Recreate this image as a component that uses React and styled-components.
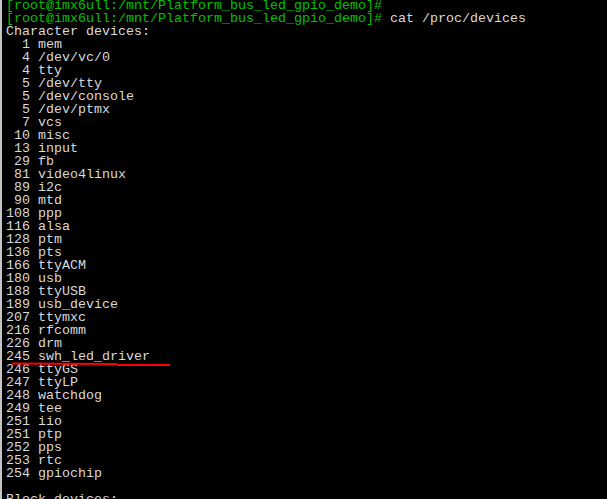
import React from "react";
import styled, { createGlobalStyle } from "styled-components";

const Global = createGlobalStyle`
  html, body {
    margin: 0;
    padding: 0;
    background: #000;
    overflow: hidden;
  }
`

const prompt = "[root@imx6ull:/mnt/Platform_bus_led_gpio_demo]#"

const devices = [
  ["1", "mem"], ["4", "/dev/vc/0"], ["4", "tty"], ["5", "/dev/tty"],
  ["5", "/dev/console"], ["5", "/dev/ptmx"], ["7", "vcs"], ["10", "misc"],
  ["13", "input"], ["29", "fb"], ["81", "video4linux"], ["89", "i2c"],
  ["90", "mtd"], ["108", "ppp"], ["116", "alsa"], ["128", "ptm"],
  ["136", "pts"], ["166", "ttyACM"], ["180", "usb"], ["188", "ttyUSB"],
  ["189", "usb_device"], ["207", "ttymxc"], ["216", "rfcomm"], ["226", "drm"],
  ["245", "swh_led_driver"], ["246", "ttyGS"], ["247", "ttyLP"], ["248", "watchdog"],
  ["249", "tee"], ["251", "iio"], ["251", "ptp"], ["252", "pps"],
  ["253", "rtc"], ["254", "gpiochip"],
]

function App() {
  return <Screen>
    <Global />
    <Terminal>
      <Line><Prompt>{prompt}</Prompt></Line>
      <Line><Prompt>{prompt}</Prompt> cat /proc/devices</Line>
      <Line>Character devices:</Line>
      {devices.map(([num, name], i) => (
        <Line key={i}>{num.padStart(3, " ")} {name}</Line>
      ))}
      <Line> </Line>
      <Line>Block devices:</Line>
    </Terminal>
    <Mark width="607" height="499">
      <polyline points="12,363.5 117,364" stroke="#ff0000" strokeWidth="2" fill="none" />
      <polyline points="117,365 170,365" stroke="#ff0000" strokeWidth="2" fill="none" />
    </Mark>
  </Screen>
}

export default App

const Screen = styled.div`
  position: relative;
  width: 607px;
  height: 499px;
  overflow: hidden;
  background: #000;
  border-left: 2px solid #c4c4c4;
  box-sizing: border-box;
`
const Terminal = styled.div`
  margin-top: -1px;
  padding-left: 4px;
  font-family: "Liberation Mono", "DejaVu Sans Mono", monospace;
  font-size: 13.33px;
  line-height: 13px;
  color: #d9d9d9;
`
const Line = styled.div`
  white-space: pre;
  height: 13px;
`
const Prompt = styled.span`
  color: #00c000;
`
const Mark = styled.svg`
  position: absolute;
  left: -2px;
  top: 0;
`
